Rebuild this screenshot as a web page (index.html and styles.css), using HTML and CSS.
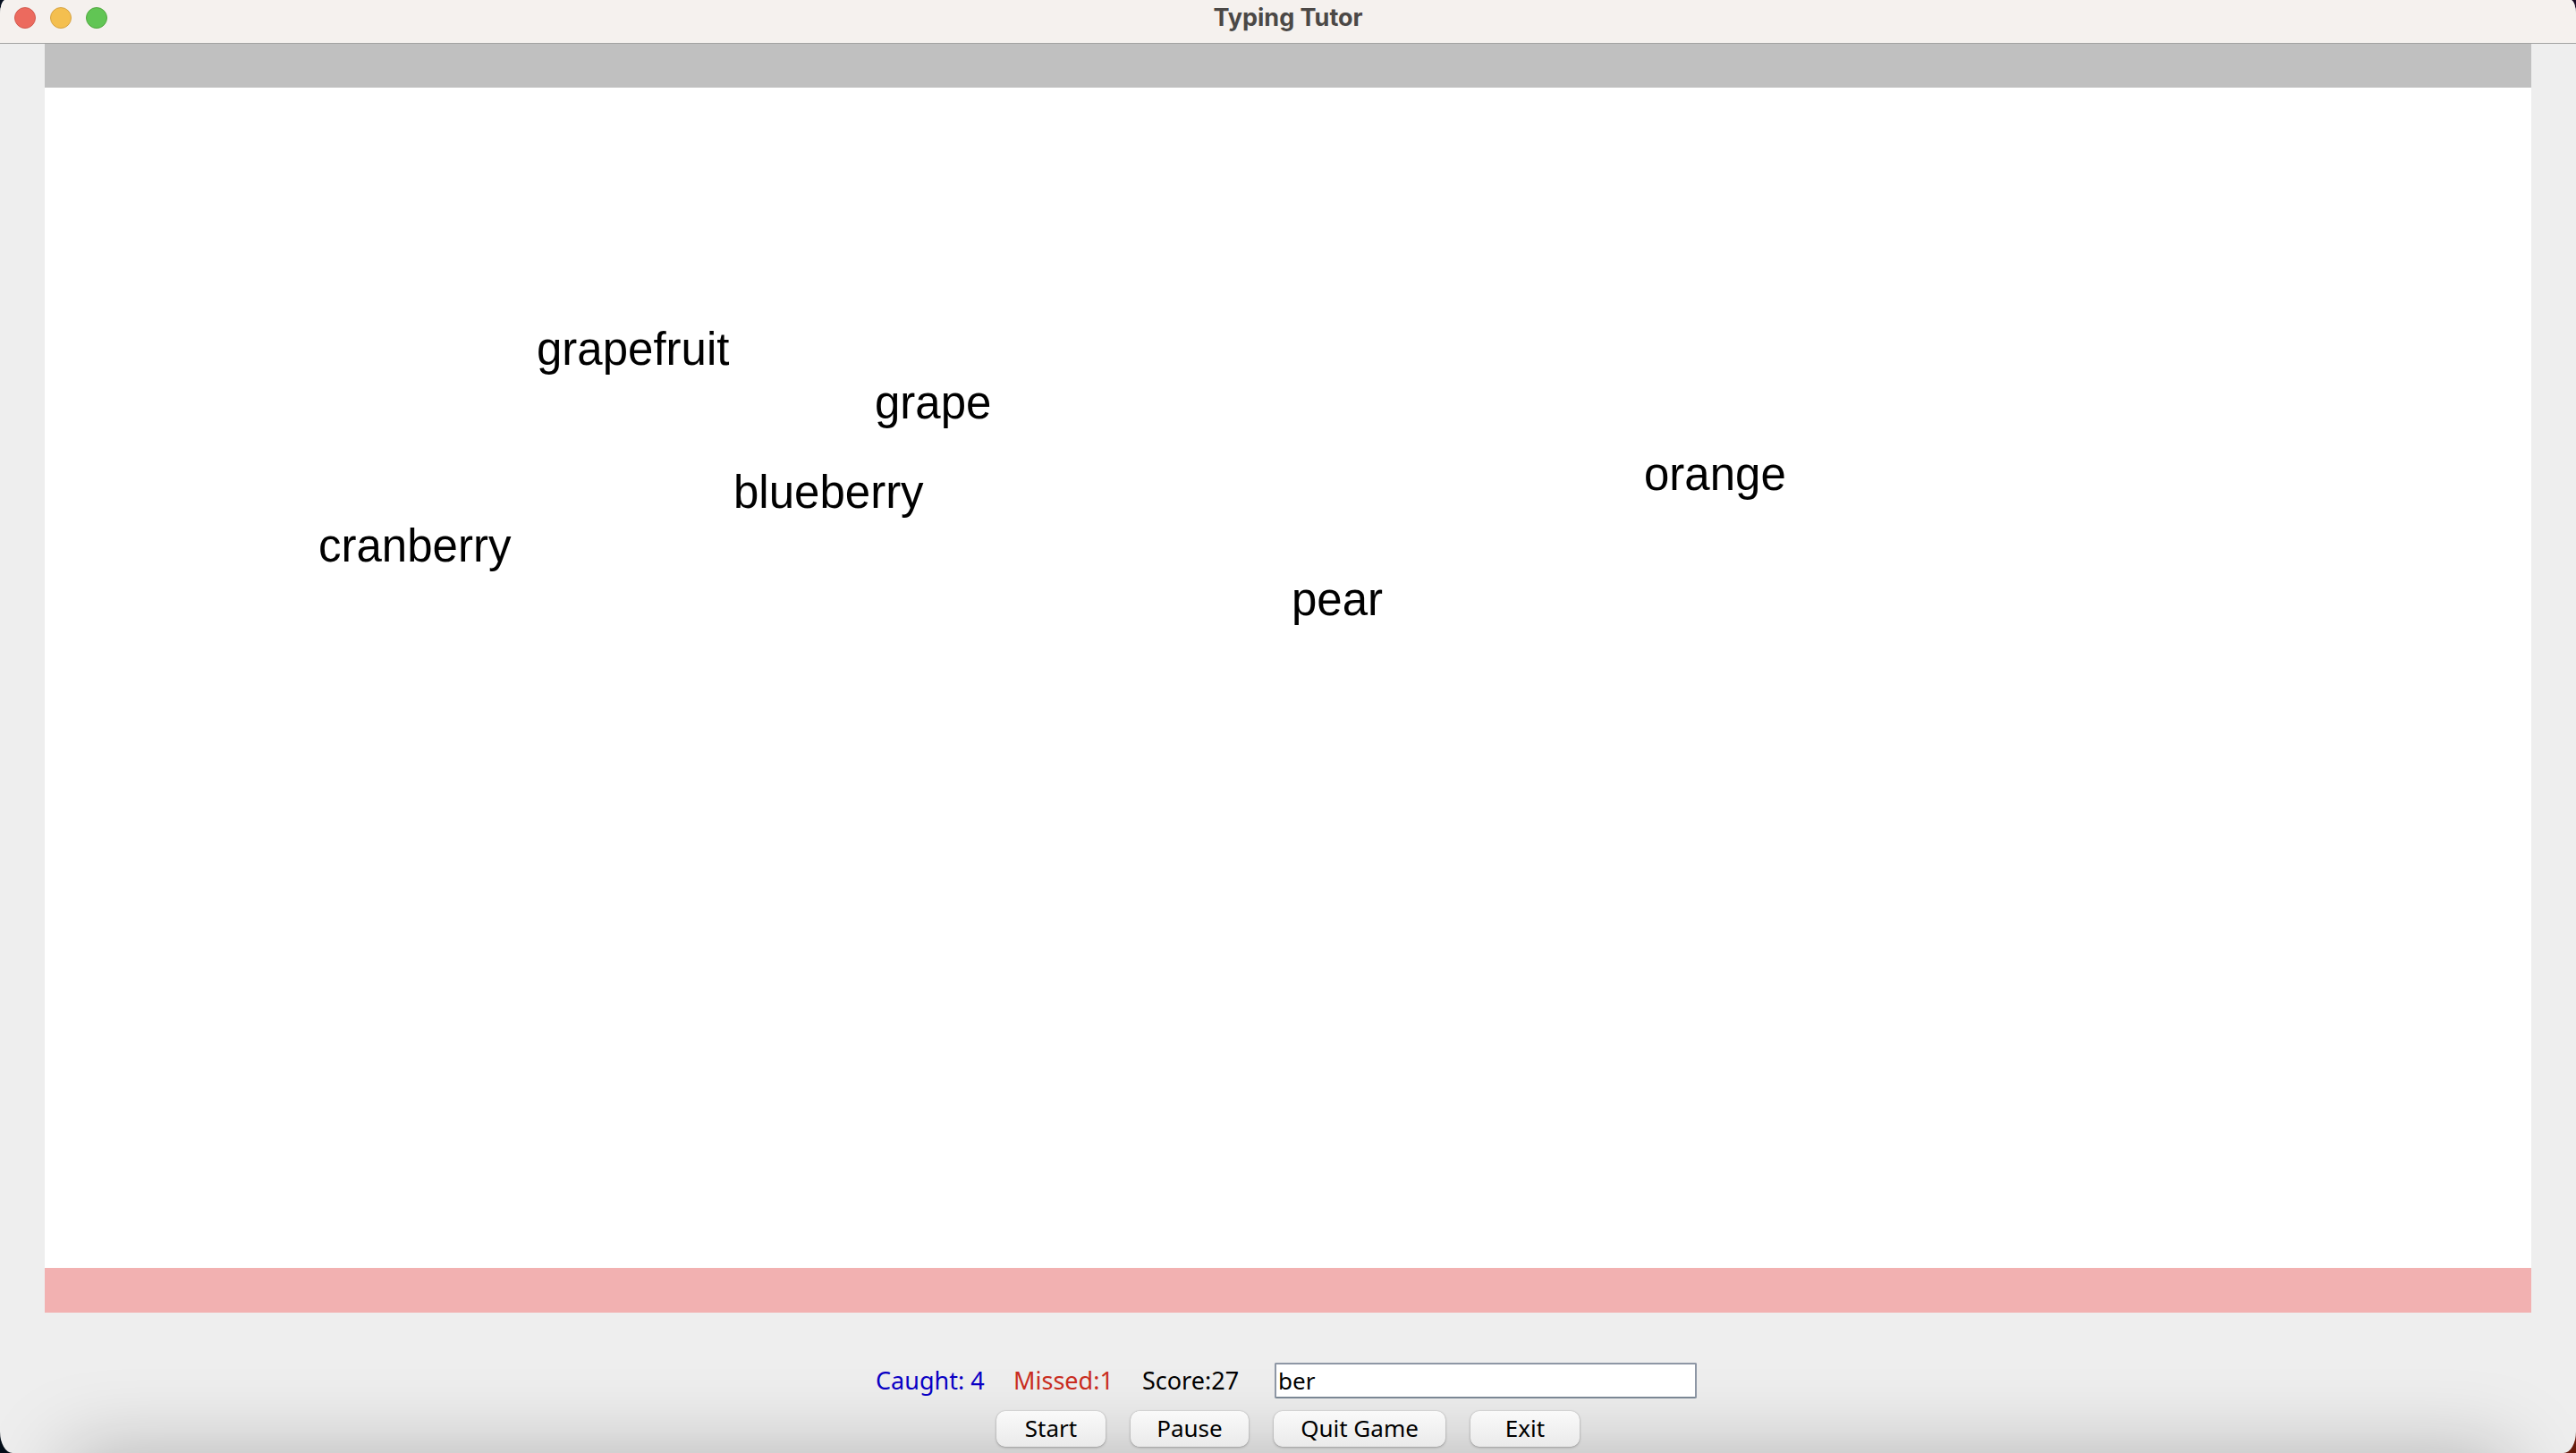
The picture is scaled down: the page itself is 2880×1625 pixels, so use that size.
FILE: index.html
```html
<!DOCTYPE html>
<html lang="en">
<head>
<meta charset="utf-8">
<meta name="viewport" content="width=device-width, initial-scale=1">
<title>Typing Tutor</title>
<link rel="stylesheet" href="styles.css">
</head>
<body>
<div class="window">
  <header class="titlebar">
    <div class="lights">
      <button class="light light-close" type="button" aria-label="Close"></button>
      <button class="light light-minimise" type="button" aria-label="Minimise"></button>
      <button class="light light-zoom" type="button" aria-label="Zoom"></button>
    </div>
    <h1 class="title">Typing Tutor</h1>
  </header>
  <main class="board">
    <div class="zone zone-start"></div>
    <div class="field">
      <span class="word word-grapefruit">grapefruit</span>
      <span class="word word-grape">grape</span>
      <span class="word word-orange">orange</span>
      <span class="word word-blueberry">blueberry</span>
      <span class="word word-cranberry">cranberry</span>
      <span class="word word-pear">pear</span>
    </div>
    <div class="zone zone-missed"></div>
  </main>
  <footer class="controls">
    <div class="row stats">
      <span class="stat caught">Caught: 4</span>
      <span class="stat missed">Missed:1</span>
      <label class="stat score" for="entry">Score:27</label>
      <input class="entry" id="entry" type="text" value="ber" autocomplete="off" spellcheck="false">
    </div>
    <div class="row actions">
      <button class="action" type="button">Start</button>
      <button class="action action-medium" type="button">Pause</button>
      <button class="action action-wide" type="button">Quit Game</button>
      <button class="action" type="button">Exit</button>
    </div>
  </footer>
</div>
</body>
</html>
```
FILE: styles.css
```css
* {
  box-sizing: border-box;
}

body {
  margin: 0;
  background: linear-gradient(#06101f 50%, #030d18 50%) left / 50% 100% no-repeat,
              linear-gradient(#1b0c25 50%, #681a0b 50%) right / 50% 100% no-repeat;
  color: #000;
  font-family: "Noto Sans", "Open Sans", sans-serif;
  font-size: 26px;
  line-height: 40px;
}

.window {
  position: relative;
  display: flex;
  flex-direction: column;
  min-height: 100vh;
  overflow: hidden;
  border-radius: 6px 6px 14px 14px / 16px 16px 24px 24px;
  background: #eee;
}

/* Soft shade that rises from the bottom edge of the window */
.window::after {
  content: "";
  position: absolute;
  top: 100%;
  left: 75px;
  right: 75px;
  height: 200px;
  box-shadow: 0 0 90px rgba(0, 0, 0, 0.25);
}

.titlebar {
  display: grid;
  grid-template-columns: 1fr auto 1fr;
  height: 49px;
  padding: 0 16px 8px;
  border-bottom: 1px solid #a3a3a1;
  background: #f5f1ee;
}

.lights {
  display: flex;
  align-items: center;
  gap: 16px;
}

.light {
  width: 24px;
  height: 24px;
  padding: 0;
  border: 1px solid;
  border-radius: 50%;
}

.light-close {
  border-color: #d25b50;
  background: #ec6a5e;
}

.light-minimise {
  border-color: #d6a344;
  background: #f4bf4f;
}

.light-zoom {
  border-color: #51a73f;
  background: #61c554;
}

.title {
  margin: 0;
  color: #4b4846;
  font: 700 27px/40px Inter, "Liberation Sans", sans-serif;
}

.board {
  display: flex;
  flex: 1;
  flex-direction: column;
  margin: 0 50px;
  background: #fff;
}

.zone {
  height: 50px;
}

.zone-start {
  height: 49px;
  background: #c0c0c0;
}

.zone-missed {
  background: #f2b1b1;
}

.field {
  position: relative;
  flex: 1;
}

.word {
  position: absolute;
  font: 51px/62px "Liberation Sans", Arial, sans-serif;
}

.word-grapefruit {
  left: 550px;
  top: 262px;
}

.word-grape {
  left: 928px;
  top: 322px;
}

.word-orange {
  left: 1788px;
  top: 402px;
}

.word-blueberry {
  left: 770px;
  top: 422px;
}

.word-cranberry {
  left: 306px;
  top: 482px;
}

.word-pear {
  left: 1394px;
  top: 542px;
}

.controls {
  position: relative;
  z-index: 1;
  display: flex;
  flex-direction: column;
  gap: 14px;
  padding: 56px 0 7px;
}

.row {
  display: flex;
  justify-content: center;
}

.stats {
  gap: 30px;
  padding-right: 4px;
}

.stat {
  font-size: 27px;
  white-space: nowrap;
}

.caught {
  width: 124px;
  color: #0a00c4;
}

.missed {
  width: 114px;
  color: #c92c20;
}

.score {
  width: 118px;
}

.entry {
  width: 472px;
  height: 40px;
  padding: 0 2px;
  border: 2px solid #8e97a5;
  border-bottom-color: #7b8794;
  border-radius: 2px;
  outline: none;
  background: #fff;
  color: #000;
  font: inherit;
  line-height: 36px;
}

.actions {
  gap: 28px;
}

.action {
  width: 122px;
  height: 40px;
  padding: 0 0 3px;
  border: 0;
  border-radius: 10px;
  background: linear-gradient(#fafafa, #eaeaea);
  box-shadow: 0 0 1px rgba(0, 0, 0, 0.4), 0 1px 3px rgba(0, 0, 0, 0.25);
  color: #000;
  font: inherit;
  line-height: 36px;
}

.action-medium {
  width: 132px;
}

.action-wide {
  width: 192px;
}
```
